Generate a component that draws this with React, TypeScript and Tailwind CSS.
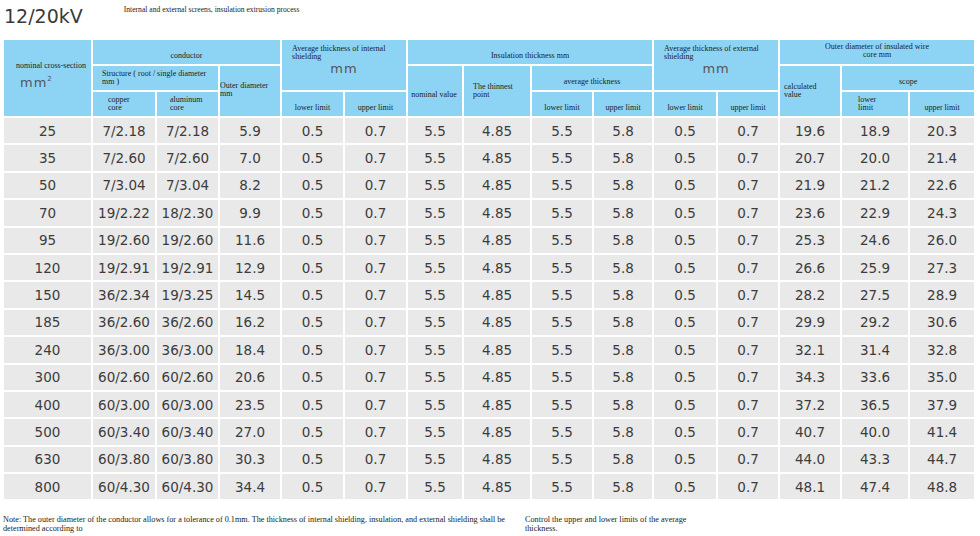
import React from "react"

const rows: string[][] = [
  ["25", "7/2.18", "7/2.18", "5.9", "19.6", "18.9", "20.3"],
  ["35", "7/2.60", "7/2.60", "7.0", "20.7", "20.0", "21.4"],
  ["50", "7/3.04", "7/3.04", "8.2", "21.9", "21.2", "22.6"],
  ["70", "19/2.22", "18/2.30", "9.9", "23.6", "22.9", "24.3"],
  ["95", "19/2.60", "19/2.60", "11.6", "25.3", "24.6", "26.0"],
  ["120", "19/2.91", "19/2.91", "12.9", "26.6", "25.9", "27.3"],
  ["150", "36/2.34", "19/3.25", "14.5", "28.2", "27.5", "28.9"],
  ["185", "36/2.60", "36/2.60", "16.2", "29.9", "29.2", "30.6"],
  ["240", "36/3.00", "36/3.00", "18.4", "32.1", "31.4", "32.8"],
  ["300", "60/2.60", "60/2.60", "20.6", "34.3", "33.6", "35.0"],
  ["400", "60/3.00", "60/3.00", "23.5", "37.2", "36.5", "37.9"],
  ["500", "60/3.40", "60/3.40", "27.0", "40.7", "40.0", "41.4"],
  ["630", "60/3.80", "60/3.80", "30.3", "44.0", "43.3", "44.7"],
  ["800", "60/4.30", "60/4.30", "34.4", "48.1", "47.4", "48.8"],
]

const widths = [89, 64, 63, 62, 63, 63, 56, 68, 62, 60, 64, 62, 62, 68, 66]

const serif = "font-['Liberation_Serif',serif] text-[8px] leading-[8px] text-[#222]"
const th = "bg-[#8dd4f4] border-2 border-white p-0 font-normal align-middle"
const mm = "font-['DejaVu_Sans',sans-serif] text-[13px] leading-[14px] text-[#555] tracking-[1px]"

function Limits() {
  return (
    <>
      <th className={th}>
        <span className={serif}>lower limit</span>
      </th>
      <th className={th}>
        <span className={serif}>upper limit</span>
      </th>
    </>
  )
}

export default function App() {
  return (
    <div className="w-[980px] h-[536px] bg-white overflow-hidden">
      {/* Title */}
      <div className="h-[38px] flex items-start pl-[4px]">
        <span className="mt-[5px] font-['DejaVu_Sans',sans-serif] text-[19px] leading-[22px] text-[#3a3a3a]">
          12/20kV
        </span>
        <span className="ml-[41px] mt-[5px] font-['Liberation_Serif',serif] text-[7.6px] leading-[9px] text-[#222]">
          Internal and external screens, insulation extrusion process
        </span>
      </div>

      <table className="ml-[2px] border-collapse table-fixed w-[974px]">
        <colgroup>
          {widths.map((w, i) => (
            <col key={i} style={{ width: w }} />
          ))}
        </colgroup>
        <thead>
          <tr className="h-[24px]">
            <th rowSpan={3} className={th}>
              <div className="flex flex-col items-start pl-[12px] -mt-[4px]">
                <span className={serif}>nominal cross-section</span>
                <span className={mm + " mt-[6px] ml-[4px]"}>
                  mm
                  <span className="relative -top-[6px] text-[7px] leading-none">2</span>
                </span>
              </div>
            </th>
            <th colSpan={3} className={th}>
              <span className={serif}>conductor</span>
            </th>
            <th colSpan={2} rowSpan={2} className={th + " align-top"}>
              <div className="flex flex-col pt-[5px]">
                <span className={serif + " text-left pl-[10px] pr-[14px]"}>
                  Average thickness of internal shielding
                </span>
                <span className={mm + " mt-[1px]"}>mm</span>
              </div>
            </th>
            <th colSpan={4} className={th}>
              <span className={serif}>Insulation thickness mm</span>
            </th>
            <th colSpan={2} rowSpan={2} className={th + " align-top"}>
              <div className="flex flex-col pt-[5px]">
                <span className={serif + " text-left pl-[10px] pr-[14px]"}>
                  Average thickness of external shielding
                </span>
                <span className={mm + " mt-[1px]"}>mm</span>
              </div>
            </th>
            <th colSpan={3} className={th + " align-top"}>
              <div className={serif + " pt-[3px] px-[40px]"}>
                Outer diameter of insulated wire core mm
              </div>
            </th>
          </tr>
          <tr className="h-[25px]">
            <th colSpan={2} className={th + " text-left"}>
              <div className={serif + " pl-[9px] pr-[6px]"}>
                Structure ( root / single diameter mm )
              </div>
            </th>
            <th rowSpan={2} className={th + " text-left"}>
              <div className={serif + " pr-[10px] -mt-[2px]"}>Outer diameter mm</div>
            </th>
            <th rowSpan={2} className={th}>
              <span className={serif + " -ml-[2px]"}>nominal value</span>
            </th>
            <th rowSpan={2} className={th + " text-left"}>
              <div className={serif + " pl-[9px] pr-[14px]"}>The thinnest point</div>
            </th>
            <th colSpan={2} className={th}>
              <span className={serif}>average thickness</span>
            </th>
            <th rowSpan={2} className={th + " text-left"}>
              <div className={serif + " pl-[4px] pr-[14px]"}>calculated value</div>
            </th>
            <th colSpan={2} className={th}>
              <span className={serif}>scope</span>
            </th>
          </tr>
          <tr className="h-[26px]">
            <th className={th + " text-left"}>
              <div className={serif + " pl-[15px] pr-[20px]"}>copper core</div>
            </th>
            <th className={th + " text-left"}>
              <div className={serif + " pl-[13px] pr-[20px]"}>aluminum core</div>
            </th>
            <Limits />
            <Limits />
            <Limits />
            <th className={th + " text-left"}>
              <div className={serif + " pl-[16px] pr-[30px]"}>lower limit</div>
            </th>
            <th className={th}>
              <span className={serif}>upper limit</span>
            </th>
          </tr>
        </thead>
        <tbody>
          {rows.map((r) => {
            const cells = [r[0], r[1], r[2], r[3], "0.5", "0.7", "5.5", "4.85", "5.5", "5.8", "0.5", "0.7", r[4], r[5], r[6]]
            return (
              <tr key={r[0]} className="h-[27.4px]">
                {cells.map((c, i) => (
                  <td
                    key={i}
                    className="bg-[#e9e9e9] border-2 border-white p-0 text-center align-middle font-['DejaVu_Sans',sans-serif] text-[13.5px] leading-[16px] text-[#3c3c3c]"
                  >
                    {c}
                  </td>
                ))}
              </tr>
            )
          })}
        </tbody>
      </table>

      {/* Notes */}
      <div className="flex items-start mt-[14px] pl-[3px]">
        <p className="w-[510px] font-['Liberation_Serif',serif] text-[8.2px] leading-[9px] text-[#222]">
          Note: The outer diameter of the conductor allows for a tolerance of 0.1mm. The thickness of internal shielding, insulation, and external shielding shall be determined according to
        </p>
        <p className="ml-[12px] w-[176px] font-['Liberation_Serif',serif] text-[8.2px] leading-[9px] text-[#222]">
          Control the upper and lower limits of the average thickness.
        </p>
      </div>
    </div>
  )
}
